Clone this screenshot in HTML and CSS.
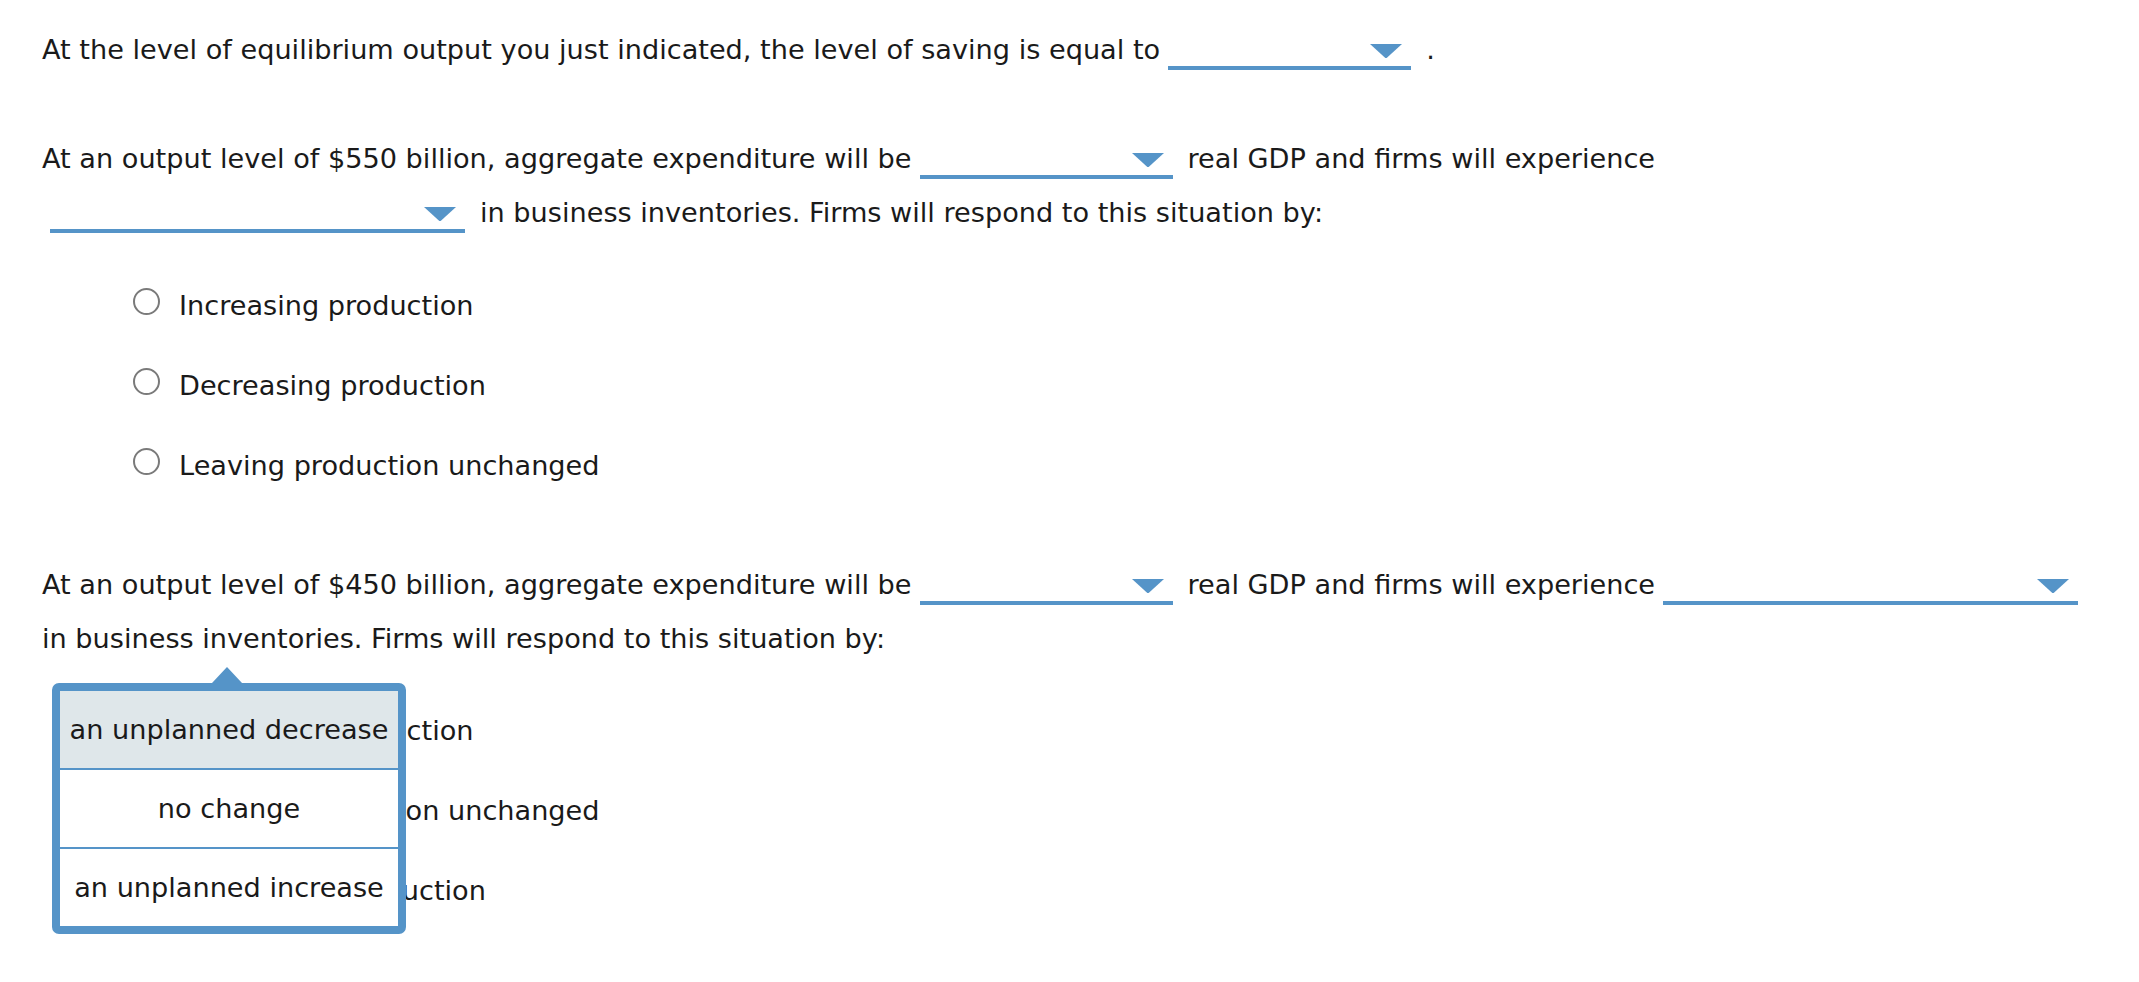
FILE: index.html
```html
<!DOCTYPE html>
<html lang="en">
<head>
<meta charset="utf-8">
<title>Equilibrium output question</title>
<link rel="stylesheet" href="styles.css">
</head>
<body>
<div class="page">
  <p class="q">At the level of equilibrium output you just indicated, the level of saving is equal to<span class="dd w-a"><svg class="arrow" viewBox="0 0 32 14"><path d="M0 0 H32 L17.2 13.4 Q16 14.4 14.8 13.4 Z"/></svg></span>.</p>

  <div class="group first">
    <p class="q">At an output level of $550 billion, aggregate expenditure will be<span class="dd w-b"><svg class="arrow" viewBox="0 0 32 14"><path d="M0 0 H32 L17.2 13.4 Q16 14.4 14.8 13.4 Z"/></svg></span>real GDP and firms will experience<br><span class="dd w-c"><svg class="arrow" viewBox="0 0 32 14"><path d="M0 0 H32 L17.2 13.4 Q16 14.4 14.8 13.4 Z"/></svg></span>in business inventories. Firms will respond to this situation by:</p>
    <ul class="radios">
      <li><span class="circle"></span><span>Increasing production</span></li>
      <li><span class="circle"></span><span>Decreasing production</span></li>
      <li><span class="circle"></span><span>Leaving production unchanged</span></li>
    </ul>
  </div>

  <div class="group last">
    <p class="q">At an output level of $450 billion, aggregate expenditure will be<span class="dd w-b"><svg class="arrow" viewBox="0 0 32 14"><path d="M0 0 H32 L17.2 13.4 Q16 14.4 14.8 13.4 Z"/></svg></span>real GDP and firms will experience<span class="dd w-c"><svg class="arrow" viewBox="0 0 32 14"><path d="M0 0 H32 L17.2 13.4 Q16 14.4 14.8 13.4 Z"/></svg></span><br>in business inventories. Firms will respond to this situation by:</p>
    <ul class="radios">
      <li><span class="circle"></span><span>Increasing production</span></li>
      <li><span class="circle"></span><span>Leaving production unchanged</span></li>
      <li><span class="circle"></span><span>Decreasing production</span></li>
    </ul>
    <div class="popup">
      <div class="opt active">an unplanned decrease</div>
      <div class="opt">no change</div>
      <div class="opt">an unplanned increase</div>
    </div>
  </div>
</div>
</body>
</html>
```

FILE: styles.css
```css
html, body {
  margin: 0;
  padding: 0;
  background: #ffffff;
}

body {
  font-family: "DejaVu Sans", Verdana, sans-serif;
  font-size: 27.15px;
  line-height: 54px;
  color: #1a1a1a;
}

.page {
  padding: 23px 0 0 42px;
}

.q {
  margin: 0;
  white-space: nowrap;
}

.group {
  margin-top: 52px;
  position: relative;
}

.group.first {
  margin-top: 55px;
}

.dd {
  display: inline-block;
  vertical-align: -11px;
  box-sizing: border-box;
  height: 26px;
  border-bottom: 4px solid #5594c8;
  margin: 0 15px 0 8px;
}

.w-a { width: 243px; }
.w-b { width: 253px; }
.w-c { width: 415px; }

.arrow {
  display: block;
  width: 32px;
  height: 14px;
  margin: 0 9px 0 auto;
  fill: #5594c8;
}

.radios {
  list-style: none;
  margin: 39px 0 65px 0;
  padding: 0 0 0 91px;
  display: flex;
  flex-direction: column;
  gap: 26px;
}

.radios li {
  display: flex;
  align-items: flex-start;
  gap: 19px;
  height: 54px;
}

.circle {
  width: 27px;
  height: 27px;
  box-sizing: border-box;
  border: 2px solid #7a7a7a;
  border-radius: 50%;
  margin-top: 9px;
  flex: none;
}

.group.last .radios {
  margin-top: 38px;
}

.popup {
  position: absolute;
  left: 10px;
  top: 125px;
  width: 354px;
  box-sizing: border-box;
  border: 8px solid #5594c8;
  border-radius: 7px;
  background: #ffffff;
  display: flex;
  flex-direction: column;
}

.popup::before {
  content: "";
  position: absolute;
  left: 152px;
  top: -24px;
  width: 0;
  height: 0;
  border-left: 15px solid transparent;
  border-right: 15px solid transparent;
  border-bottom: 16px solid #5594c8;
}

.opt {
  height: 77px;
  line-height: 77px;
  text-align: center;
  white-space: nowrap;
  color: #1a1a1a;
}

.opt + .opt {
  border-top: 2px solid #5594c8;
}

.opt.active {
  background: #dfe7ea;
}
```
